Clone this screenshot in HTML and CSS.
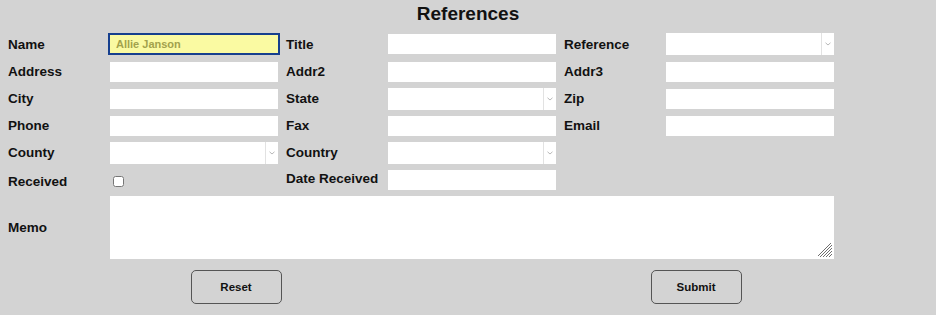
FILE: index.html
```html
<!DOCTYPE html>
<html>
<head>
<meta charset="utf-8">
<title>References</title>
<link rel="stylesheet" href="styles.css">
</head>
<body>
<h1 class="title">References</h1>
<form class="form">
  <label class="lbl">Name</label>
  <input class="field field-focus" type="text" value="Allie Janson">
  <label class="lbl">Title</label>
  <input class="field" type="text">
  <label class="lbl">Reference</label>
  <span class="combo"><select class="combo-sel"><option></option></select><span class="combo-btn"><svg width="6" height="4" viewBox="0 0 6 4"><path d="M0.5 0.8 L3 3 L5.5 0.8" fill="none" stroke="#b8b8b8" stroke-width="1"/></svg></span></span>

  <label class="lbl">Address</label>
  <input class="field" type="text">
  <label class="lbl">Addr2</label>
  <input class="field" type="text">
  <label class="lbl">Addr3</label>
  <input class="field" type="text">

  <label class="lbl">City</label>
  <input class="field" type="text">
  <label class="lbl">State</label>
  <span class="combo"><select class="combo-sel"><option></option></select><span class="combo-btn"><svg width="6" height="4" viewBox="0 0 6 4"><path d="M0.5 0.8 L3 3 L5.5 0.8" fill="none" stroke="#b8b8b8" stroke-width="1"/></svg></span></span>
  <label class="lbl">Zip</label>
  <input class="field" type="text">

  <label class="lbl">Phone</label>
  <input class="field" type="text">
  <label class="lbl">Fax</label>
  <input class="field" type="text">
  <label class="lbl">Email</label>
  <input class="field" type="text">

  <label class="lbl">County</label>
  <span class="combo"><select class="combo-sel"><option></option></select><span class="combo-btn"><svg width="6" height="4" viewBox="0 0 6 4"><path d="M0.5 0.8 L3 3 L5.5 0.8" fill="none" stroke="#b8b8b8" stroke-width="1"/></svg></span></span>
  <label class="lbl">Country</label>
  <span class="combo"><select class="combo-sel"><option></option></select><span class="combo-btn"><svg width="6" height="4" viewBox="0 0 6 4"><path d="M0.5 0.8 L3 3 L5.5 0.8" fill="none" stroke="#b8b8b8" stroke-width="1"/></svg></span></span>
  <span class="empty"></span>
  <span class="empty"></span>

  <label class="lbl lbl-received">Received</label>
  <input class="check" type="checkbox">
  <label class="lbl lbl-date">Date Received</label>
  <input class="field" type="text">
  <span class="empty"></span>
  <span class="empty"></span>

  <label class="lbl">Memo</label>
  <div class="memo-wrap">
    <textarea class="memo"></textarea>
    <svg class="grip" width="15" height="15" viewBox="0 0 15 15">
      <path d="M14 2 L2 14 M14 5 L5 14 M14 8 L8 14 M14 11 L11 14 M14 -1 L-1 14" stroke="#6e6e6e" stroke-width="1" fill="none"/>
    </svg>
  </div>
</form>
<div class="actions">
  <div class="action-cell"><button class="btn" type="button">Reset</button></div>
  <div class="action-cell"><button class="btn" type="button">Submit</button></div>
</div>
</body>
</html>
```
FILE: styles.css
```css
html, body {
  background: #d3d3d3;
}
body {
  margin: 0 8px;
  font-family: "Liberation Sans", Arial, sans-serif;
  color: #000;
}
.title {
  margin: 0;
  padding-top: 3px;
  text-align: center;
  font-family: "Liberation Sans", Arial, sans-serif;
  font-weight: bold;
  font-size: 19px;
  line-height: 22px;
  color: #111;
}
.form {
  margin-top: 8px;
  display: grid;
  grid-template-columns: 102px 176px 102px 176px 102px 168px;
  grid-template-rows: 22px 21px 21px 21px 21px 21px 63px;
  row-gap: 6px;
  align-items: center;
}
.lbl {
  font-family: "Liberation Sans", Arial, sans-serif;
  font-weight: bold;
  font-size: 13.5px;
  color: #111;
  white-space: nowrap;
}
.lbl-received {
  margin-top: 3px;
}
.lbl-date {
  margin-top: -2px;
}
.field {
  box-sizing: border-box;
  width: 168px;
  height: 20px;
  margin: 0;
  padding: 0 5px;
  border: 1px solid #fff;
  background: #fff;
  font-family: "Liberation Sans", Arial, sans-serif;
  font-size: 12px;
  outline: none;
}
.field-focus {
  background: #fafaa2;
  color: #a2a24c;
  font-weight: bold;
  font-size: 11px;
  outline: 2px solid #163f8e;
  outline-offset: 0;
  height: 18px;
  border: 0;
  padding-left: 6px;
}
.combo {
  position: relative;
  display: block;
  width: 168px;
  height: 22px;
  background: #fff;
}
.combo-sel {
  appearance: none;
  -webkit-appearance: none;
  display: block;
  width: 100%;
  height: 100%;
  margin: 0;
  border: 0;
  background: transparent;
  outline: none;
}
.combo-btn {
  position: absolute;
  top: 0;
  right: 0;
  bottom: 0;
  width: 12px;
  border-left: 1px solid #e2e2e2;
  display: flex;
  align-items: center;
  justify-content: center;
  pointer-events: none;
}
.check {
  margin: 4px 0 0 3px;
  width: 11px;
  height: 11px;
  justify-self: start;
}
.memo-wrap {
  grid-column: 2 / 7;
  position: relative;
  width: 724px;
  height: 63px;
}
.memo {
  display: block;
  box-sizing: border-box;
  width: 724px;
  height: 63px;
  margin: 0;
  border: 1px solid #fff;
  background: #fff;
  resize: none;
  outline: none;
}
.grip {
  position: absolute;
  right: 1px;
  bottom: 1px;
  pointer-events: none;
}
.actions {
  margin: 11px 2px 0 -2px;
  display: grid;
  grid-template-columns: 1fr 1fr;
}
.action-cell {
  display: flex;
  justify-content: center;
}
.btn {
  box-sizing: border-box;
  width: 91px;
  height: 34px;
  border: 1px solid #555;
  border-radius: 5px;
  background: #d3d3d3;
  font-family: "Liberation Sans", Arial, sans-serif;
  font-weight: bold;
  font-size: 11.5px;
  color: #111;
  padding: 0;
}
```
